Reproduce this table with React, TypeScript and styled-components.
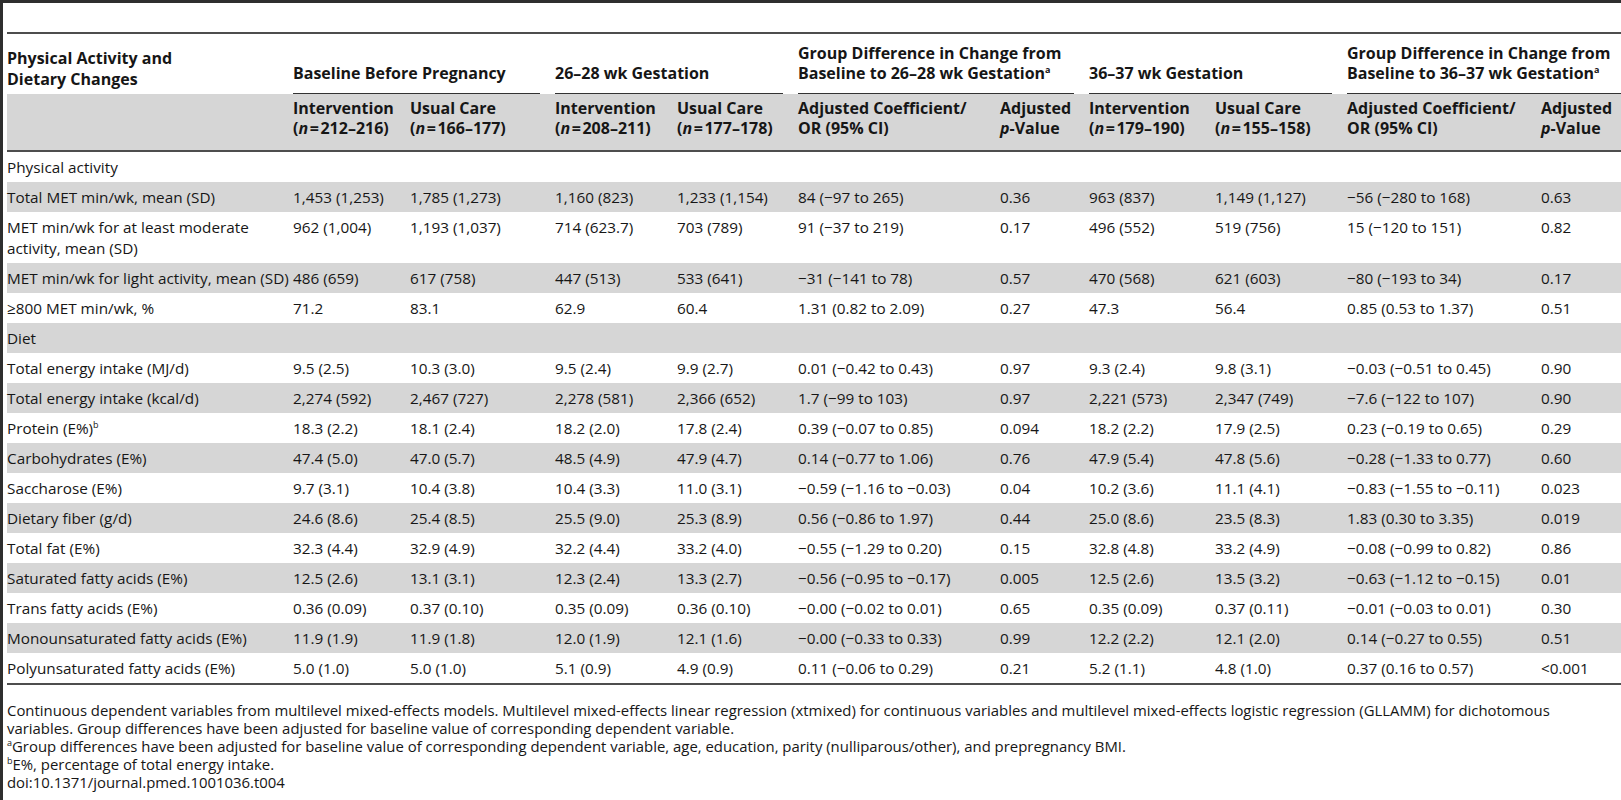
import styled, { createGlobalStyle } from "styled-components";

const GlobalStyle = createGlobalStyle`
  html, body {
    margin: 0;
    padding: 0;
    background: #fff;
    overflow: hidden;
  }
  body {
    font-family: "Open Sans", "Liberation Sans", sans-serif;
    color: #161616;
  }
`;

// column starts: 7, 293, 410, 555, 677, 798, 1000, 1089, 1215, 1347, 1541
const COLS = "286px 117px 145px 122px 121px 202px 89px 126px 132px 194px 120px";

const Page = styled.div`
  box-sizing: border-box;
  width: 1700px;
  height: 800px;
  border-left: 3px solid #2e2e2e;
  border-top: 3px solid #2e2e2e;
  padding: 29px 0 0 4px;
  font-size: 15.3px;
`;

const Table = styled.div`
  width: 1654px;
  border-top: 2px solid #4d4d4d;
  border-bottom: 2px solid #4d4d4d;
`;

const GroupRow = styled.div`
  display: grid;
  grid-template-columns: ${COLS};
  align-items: end;
  height: 60px;
`;

const LabelHead = styled.div`
  font-size: 16px;
  font-weight: 700;
  line-height: 21px;
  padding-bottom: 4px;
  white-space: nowrap;
`;

const GroupHead = styled.div`
  grid-column: span 2;
  margin-right: 15px;
  padding-bottom: 10px;
  border-bottom: 1px solid #333;
  font-size: 16px;
  font-weight: 700;
  line-height: 20px;
  white-space: nowrap;
`;

const SubRow = styled.div`
  display: grid;
  grid-template-columns: ${COLS};
  background: #d6d6d6;
  border-bottom: 2px solid #4d4d4d;
  padding: 4px 0 12px;
`;

const SubHead = styled.div`
  font-size: 16px;
  font-weight: 700;
  line-height: 20px;
  white-space: nowrap;
`;

const Row = styled.div<{ $shaded: boolean }>`
  display: grid;
  grid-template-columns: ${COLS};
  background: ${(p) => (p.$shaded ? "#d6d6d6" : "#fff")};
  padding: 4.5px 0;
  line-height: 21px;
`;

const Cell = styled.div`
  white-space: nowrap;
`;

const Sup = styled.sup`
  font-size: 9px;
  line-height: 0;
  vertical-align: 6px;
`;

const Notes = styled.div`
  margin-top: 16px;
  font-size: 14.9px;
  line-height: 18px;
  white-space: nowrap;
`;

type DataRow = { label: React.ReactNode; values?: string[] };

const rows: DataRow[] = [
  { label: "Physical activity" },
  {
    label: "Total MET min/wk, mean (SD)",
    values: ["1,453 (1,253)", "1,785 (1,273)", "1,160 (823)", "1,233 (1,154)", "84 (−97 to 265)", "0.36", "963 (837)", "1,149 (1,127)", "−56 (−280 to 168)", "0.63"],
  },
  {
    label: (
      <>
        MET min/wk for at least moderate
        <br />
        activity, mean (SD)
      </>
    ),
    values: ["962 (1,004)", "1,193 (1,037)", "714 (623.7)", "703 (789)", "91 (−37 to 219)", "0.17", "496 (552)", "519 (756)", "15 (−120 to 151)", "0.82"],
  },
  {
    label: "MET min/wk for light activity, mean (SD)",
    values: ["486 (659)", "617 (758)", "447 (513)", "533 (641)", "−31 (−141 to 78)", "0.57", "470 (568)", "621 (603)", "−80 (−193 to 34)", "0.17"],
  },
  {
    label: "≥800 MET min/wk, %",
    values: ["71.2", "83.1", "62.9", "60.4", "1.31 (0.82 to 2.09)", "0.27", "47.3", "56.4", "0.85 (0.53 to 1.37)", "0.51"],
  },
  { label: "Diet" },
  {
    label: "Total energy intake (MJ/d)",
    values: ["9.5 (2.5)", "10.3 (3.0)", "9.5 (2.4)", "9.9 (2.7)", "0.01 (−0.42 to 0.43)", "0.97", "9.3 (2.4)", "9.8 (3.1)", "−0.03 (−0.51 to 0.45)", "0.90"],
  },
  {
    label: "Total energy intake (kcal/d)",
    values: ["2,274 (592)", "2,467 (727)", "2,278 (581)", "2,366 (652)", "1.7 (−99 to 103)", "0.97", "2,221 (573)", "2,347 (749)", "−7.6 (−122 to 107)", "0.90"],
  },
  {
    label: (
      <>
        Protein (E%)<Sup>b</Sup>
      </>
    ),
    values: ["18.3 (2.2)", "18.1 (2.4)", "18.2 (2.0)", "17.8 (2.4)", "0.39 (−0.07 to 0.85)", "0.094", "18.2 (2.2)", "17.9 (2.5)", "0.23 (−0.19 to 0.65)", "0.29"],
  },
  {
    label: "Carbohydrates (E%)",
    values: ["47.4 (5.0)", "47.0 (5.7)", "48.5 (4.9)", "47.9 (4.7)", "0.14 (−0.77 to 1.06)", "0.76", "47.9 (5.4)", "47.8 (5.6)", "−0.28 (−1.33 to 0.77)", "0.60"],
  },
  {
    label: "Saccharose (E%)",
    values: ["9.7 (3.1)", "10.4 (3.8)", "10.4 (3.3)", "11.0 (3.1)", "−0.59 (−1.16 to −0.03)", "0.04", "10.2 (3.6)", "11.1 (4.1)", "−0.83 (−1.55 to −0.11)", "0.023"],
  },
  {
    label: "Dietary fiber (g/d)",
    values: ["24.6 (8.6)", "25.4 (8.5)", "25.5 (9.0)", "25.3 (8.9)", "0.56 (−0.86 to 1.97)", "0.44", "25.0 (8.6)", "23.5 (8.3)", "1.83 (0.30 to 3.35)", "0.019"],
  },
  {
    label: "Total fat (E%)",
    values: ["32.3 (4.4)", "32.9 (4.9)", "32.2 (4.4)", "33.2 (4.0)", "−0.55 (−1.29 to 0.20)", "0.15", "32.8 (4.8)", "33.2 (4.9)", "−0.08 (−0.99 to 0.82)", "0.86"],
  },
  {
    label: "Saturated fatty acids (E%)",
    values: ["12.5 (2.6)", "13.1 (3.1)", "12.3 (2.4)", "13.3 (2.7)", "−0.56 (−0.95 to −0.17)", "0.005", "12.5 (2.6)", "13.5 (3.2)", "−0.63 (−1.12 to −0.15)", "0.01"],
  },
  {
    label: "Trans fatty acids (E%)",
    values: ["0.36 (0.09)", "0.37 (0.10)", "0.35 (0.09)", "0.36 (0.10)", "−0.00 (−0.02 to 0.01)", "0.65", "0.35 (0.09)", "0.37 (0.11)", "−0.01 (−0.03 to 0.01)", "0.30"],
  },
  {
    label: "Monounsaturated fatty acids (E%)",
    values: ["11.9 (1.9)", "11.9 (1.8)", "12.0 (1.9)", "12.1 (1.6)", "−0.00 (−0.33 to 0.33)", "0.99", "12.2 (2.2)", "12.1 (2.0)", "0.14 (−0.27 to 0.55)", "0.51"],
  },
  {
    label: "Polyunsaturated fatty acids (E%)",
    values: ["5.0 (1.0)", "5.0 (1.0)", "5.1 (0.9)", "4.9 (0.9)", "0.11 (−0.06 to 0.29)", "0.21", "5.2 (1.1)", "4.8 (1.0)", "0.37 (0.16 to 0.57)", "<0.001"],
  },
];

const groups: React.ReactNode[] = [
  "Baseline Before Pregnancy",
  "26–28 wk Gestation",
  <>
    Group Difference in Change from
    <br />
    Baseline to 26–28 wk Gestation<Sup>a</Sup>
  </>,
  "36–37 wk Gestation",
  <>
    Group Difference in Change from
    <br />
    Baseline to 36–37 wk Gestation<Sup>a</Sup>
  </>,
];

function Count({ range }: { range: string }) {
  return (
    <>
      (<i>n</i>&#8202;=&#8202;{range})
    </>
  );
}

const subHeads: React.ReactNode[] = [
  <>Intervention<br /><Count range="212–216" /></>,
  <>Usual Care<br /><Count range="166–177" /></>,
  <>Intervention<br /><Count range="208–211" /></>,
  <>Usual Care<br /><Count range="177–178" /></>,
  <>Adjusted Coefficient/<br />OR (95% CI)</>,
  <>Adjusted<br /><i>p</i>-Value</>,
  <>Intervention<br /><Count range="179–190" /></>,
  <>Usual Care<br /><Count range="155–158" /></>,
  <>Adjusted Coefficient/<br />OR (95% CI)</>,
  <>Adjusted<br /><i>p</i>-Value</>,
];

export default function App() {
  return (
    <>
      <GlobalStyle />
      <Page>
        <Table>
          <GroupRow>
            <LabelHead>
              Physical Activity and
              <br />
              Dietary Changes
            </LabelHead>
            {groups.map((g, i) => (
              <GroupHead key={i}>{g}</GroupHead>
            ))}
          </GroupRow>
          <SubRow>
            <SubHead />
            {subHeads.map((s, i) => (
              <SubHead key={i}>{s}</SubHead>
            ))}
          </SubRow>
          {rows.map((r, i) => (
            <Row key={i} $shaded={i % 2 === 1}>
              <Cell>{r.label}</Cell>
              {(r.values ?? []).map((v, j) => (
                <Cell key={j}>{v}</Cell>
              ))}
            </Row>
          ))}
        </Table>
        <Notes>
          Continuous dependent variables from multilevel mixed-effects models. Multilevel mixed-effects linear regression (xtmixed) for continuous variables and multilevel mixed-effects logistic regression (GLLAMM) for dichotomous
          <br />
          variables. Group differences have been adjusted for baseline value of corresponding dependent variable.
          <br />
          <Sup>a</Sup>Group differences have been adjusted for baseline value of corresponding dependent variable, age, education, parity (nulliparous/other), and prepregnancy BMI.
          <br />
          <Sup>b</Sup>E%, percentage of total energy intake.
          <br />
          doi:10.1371/journal.pmed.1001036.t004
        </Notes>
      </Page>
    </>
  );
}
